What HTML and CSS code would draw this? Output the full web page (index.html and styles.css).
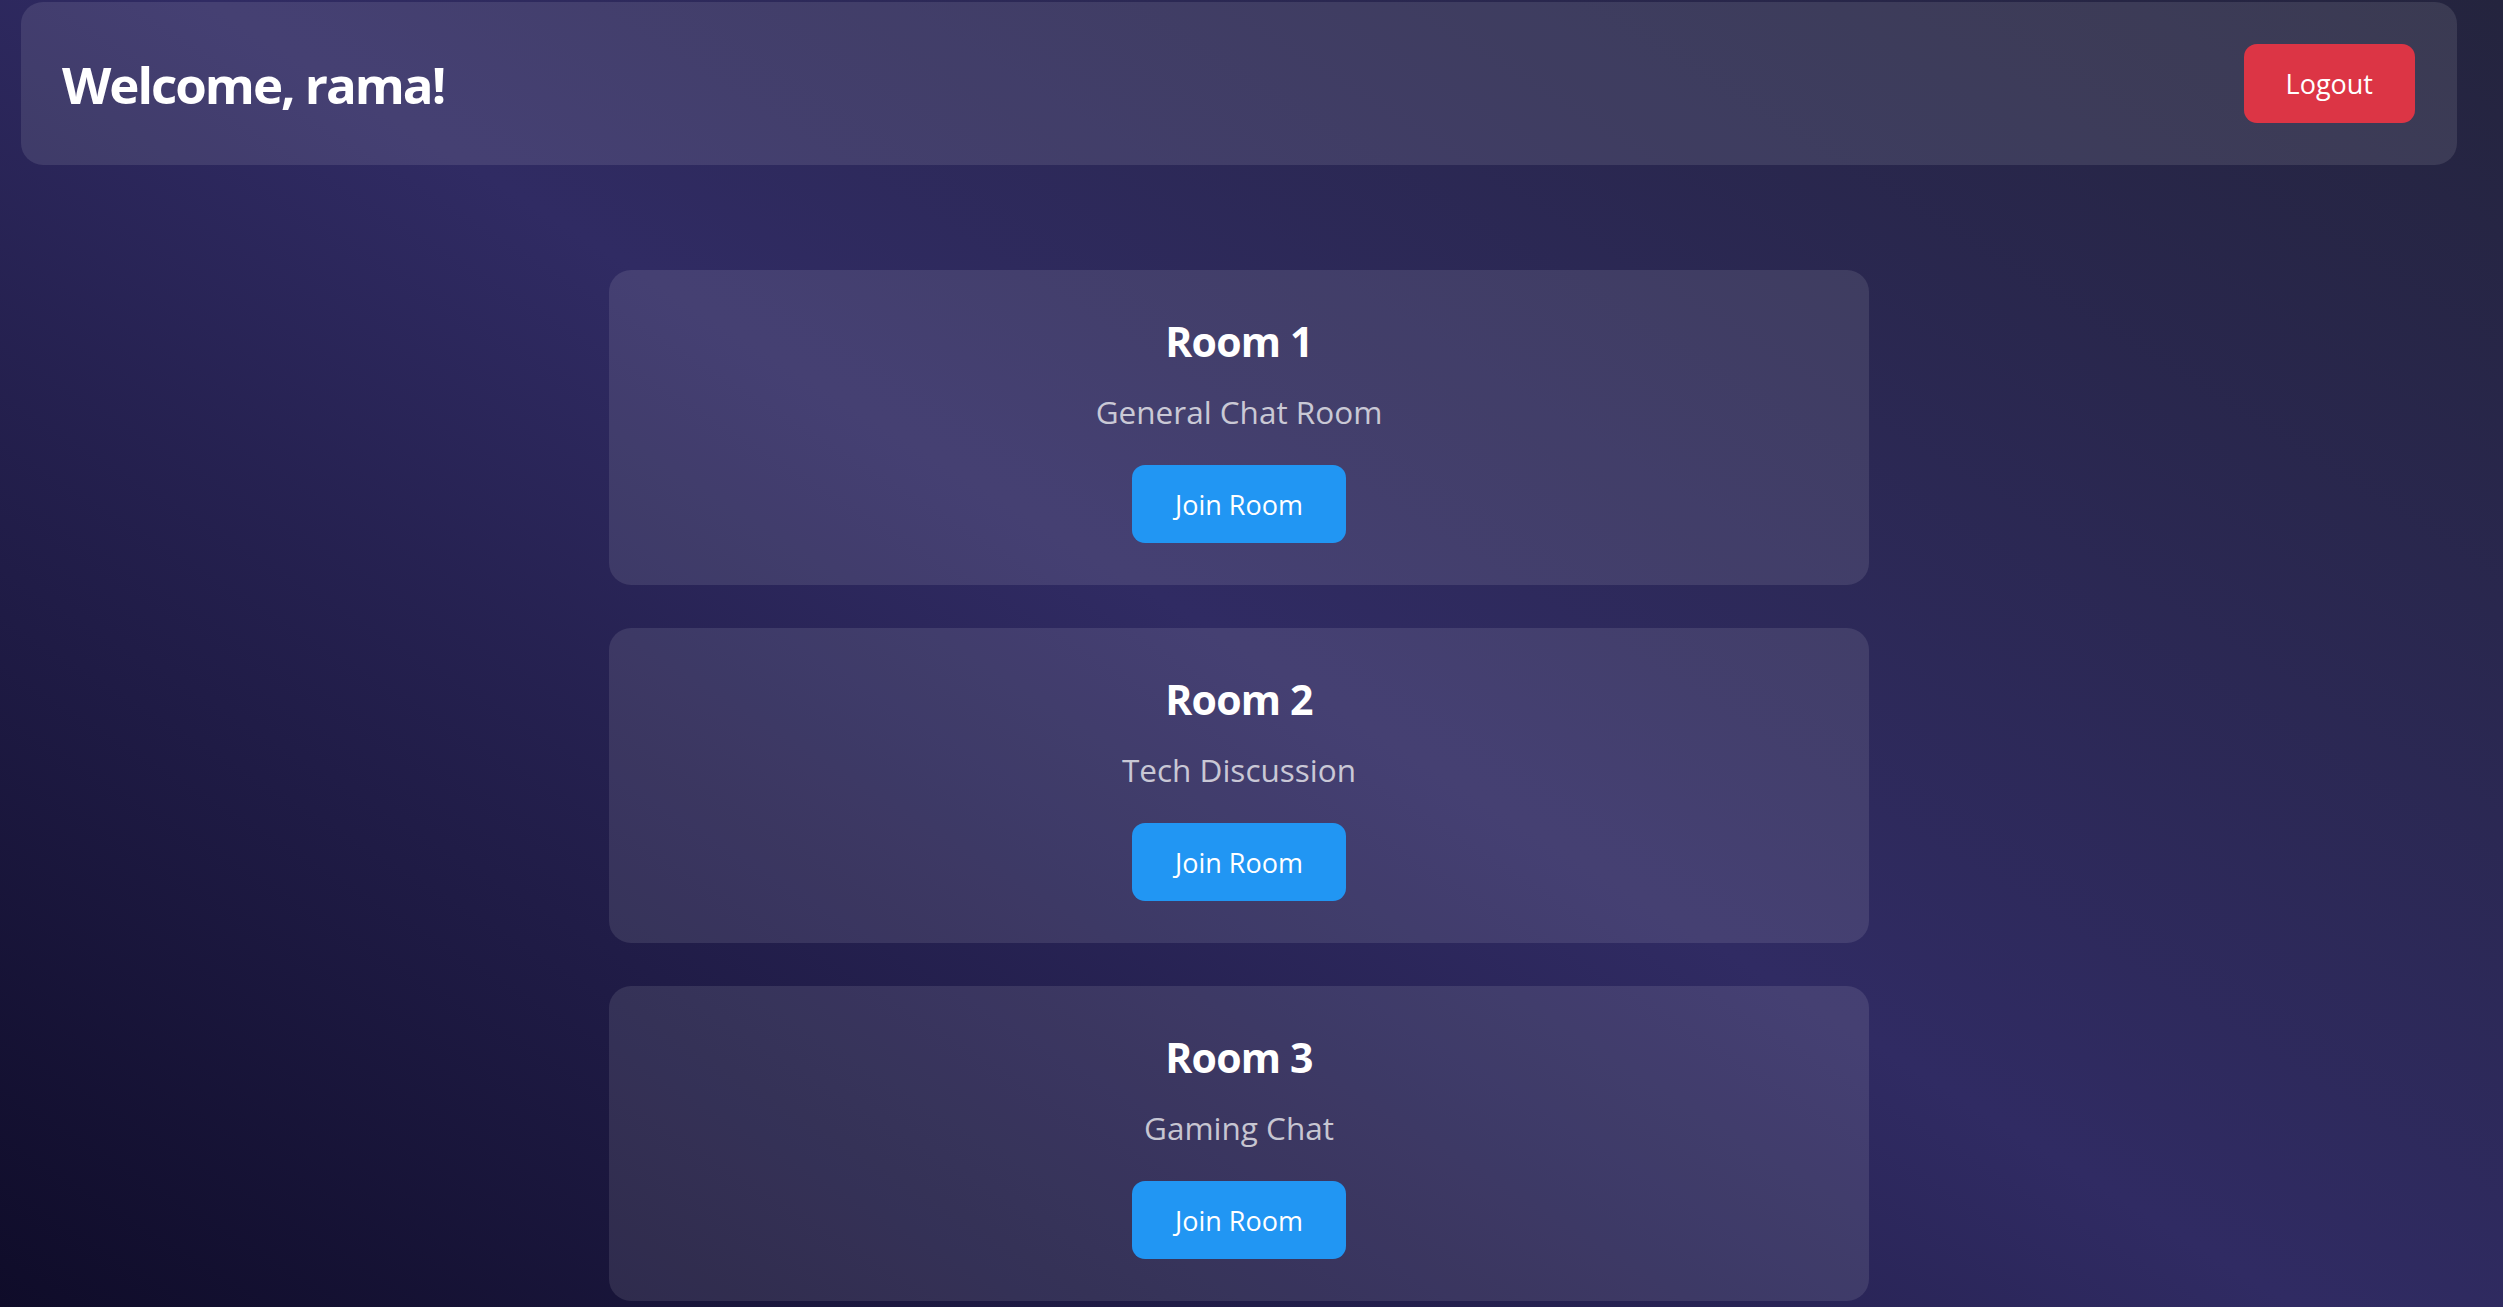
FILE: index.html
```html
<!DOCTYPE html>
<html lang="en">
<head>
<meta charset="utf-8">
<title>Chat Rooms</title>
<link rel="stylesheet" href="styles.css">
</head>
<body>
  <header class="topbar">
    <h1 class="welcome">Welcome, rama!</h1>
    <button class="btn btn-logout">Logout</button>
  </header>
  <main class="rooms">
    <section class="room-card">
      <h2 class="room-title">Room 1</h2>
      <p class="room-desc">General Chat Room</p>
      <button class="btn btn-join">Join Room</button>
    </section>
    <section class="room-card">
      <h2 class="room-title">Room 2</h2>
      <p class="room-desc">Tech Discussion</p>
      <button class="btn btn-join">Join Room</button>
    </section>
    <section class="room-card">
      <h2 class="room-title">Room 3</h2>
      <p class="room-desc">Gaming Chat</p>
      <button class="btn btn-join">Join Room</button>
    </section>
  </main>
</body>
</html>
```

FILE: styles.css
```css
* {
  box-sizing: border-box;
}

html {
  height: 100%;
}

body {
  margin: 0;
  min-height: 100vh;
  padding: 2px 46px 0 21px;
  font-family: "Open Sans", "Noto Sans", "Liberation Sans", sans-serif;
  color: #ffffff;
  background: linear-gradient(32deg, #0f0c29 0%, #302b63 50%, #24243e 100%);
}

.topbar {
  display: flex;
  align-items: center;
  justify-content: space-between;
  height: 163px;
  padding: 0 42px 0 41px;
  border-radius: 22px;
  background: rgba(255, 255, 255, 0.1);
}

.welcome {
  margin: 2px 0 0;
  font-size: 51px;
  font-weight: 700;
  line-height: 1.2;
  letter-spacing: -2px;
}

.btn {
  border: none;
  border-radius: 13px;
  color: #ffffff;
  font-family: inherit;
  font-size: 27px;
  line-height: 36px;
  cursor: pointer;
}

.btn-logout {
  background: #dc3545;
  padding: 22px 42px 21px;
}

.btn-join {
  background: #2196f3;
  padding: 22px 43px 20px;
}

.rooms {
  display: flex;
  flex-direction: column;
  align-items: center;
  gap: 43px;
  padding-top: 105px;
}

.room-card {
  width: 1260px;
  padding: 47px 20px 42px;
  border-radius: 22px;
  background: rgba(255, 255, 255, 0.1);
  display: flex;
  flex-direction: column;
  align-items: center;
  text-align: center;
}

.room-title {
  margin: 0 0 27px;
  font-size: 41px;
  font-weight: 700;
  line-height: 1.2;
  letter-spacing: -0.8px;
}

.room-desc {
  margin: 0 0 34px;
  font-size: 31.5px;
  line-height: 1.2;
  color: rgba(255, 255, 255, 0.72);
}
```
